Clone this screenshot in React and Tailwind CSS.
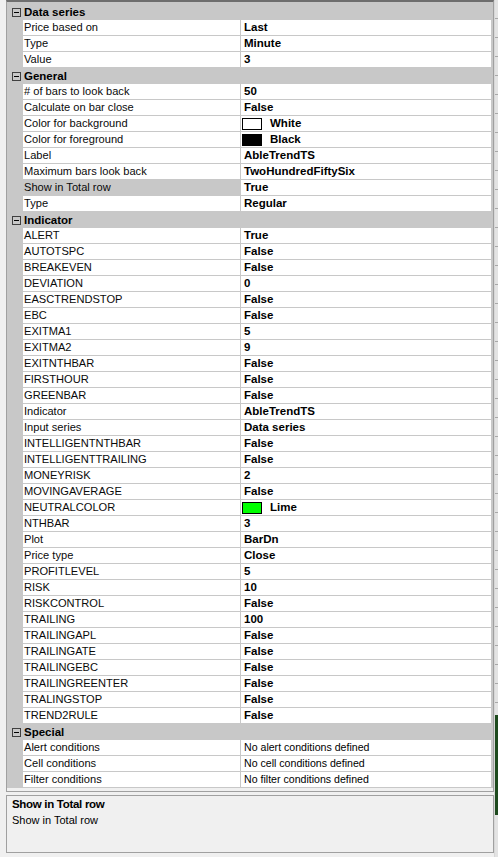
const sections = [
  {
    title: 'Data series',
    rows: [
      ['Price based on', 'Last'],
      ['Type', 'Minute'],
      ['Value', '3'],
    ],
  },
  {
    title: 'General',
    rows: [
      ['# of bars to look back', '50'],
      ['Calculate on bar close', 'False'],
      ['Color for background', 'White', 'white'],
      ['Color for foreground', 'Black', 'black'],
      ['Label', 'AbleTrendTS'],
      ['Maximum bars look back', 'TwoHundredFiftySix'],
      ['Show in Total row', 'True', null, true],
      ['Type', 'Regular'],
    ],
  },
  {
    title: 'Indicator',
    rows: [
      ['ALERT', 'True'],
      ['AUTOTSPC', 'False'],
      ['BREAKEVEN', 'False'],
      ['DEVIATION', '0'],
      ['EASCTRENDSTOP', 'False'],
      ['EBC', 'False'],
      ['EXITMA1', '5'],
      ['EXITMA2', '9'],
      ['EXITNTHBAR', 'False'],
      ['FIRSTHOUR', 'False'],
      ['GREENBAR', 'False'],
      ['Indicator', 'AbleTrendTS'],
      ['Input series', 'Data series'],
      ['INTELLIGENTNTHBAR', 'False'],
      ['INTELLIGENTTRAILING', 'False'],
      ['MONEYRISK', '2'],
      ['MOVINGAVERAGE', 'False'],
      ['NEUTRALCOLOR', 'Lime', 'lime'],
      ['NTHBAR', '3'],
      ['Plot', 'BarDn'],
      ['Price type', 'Close'],
      ['PROFITLEVEL', '5'],
      ['RISK', '10'],
      ['RISKCONTROL', 'False'],
      ['TRAILING', '100'],
      ['TRAILINGAPL', 'False'],
      ['TRAILINGATE', 'False'],
      ['TRAILINGEBC', 'False'],
      ['TRAILINGREENTER', 'False'],
      ['TRALINGSTOP', 'False'],
      ['TREND2RULE', 'False'],
    ],
  },
  {
    title: 'Special',
    plain: true,
    rows: [
      ['Alert conditions', 'No alert conditions defined'],
      ['Cell conditions', 'No cell conditions defined'],
      ['Filter conditions', 'No filter conditions defined'],
    ],
  },
]

const swatchClass = {
  white: 'bg-white',
  black: 'bg-black',
  lime: 'bg-[#00ff00]',
}

function MinusBox() {
  return (
    <span className="relative block h-[9px] w-[9px] border border-[#404040] bg-[#c8c8c8]">
      <span className="absolute left-[1px] top-[3px] h-[1px] w-[5px] bg-black" />
    </span>
  )
}

function Header({ title }) {
  return (
    <div className="flex h-[16px] bg-[#c8c8c8]">
      <div className="flex w-[16px] items-center justify-center pl-[2px]">
        <MinusBox />
      </div>
      <div className="pl-[1px] text-[11.5px] font-bold leading-[16px] text-black">{title}</div>
    </div>
  )
}

function Row({ name, value, swatch, selected, plain }) {
  return (
    <div className="flex h-[16px]">
      <div className="w-[16px] shrink-0 bg-[#c8c8c8]" />
      <div
        className={`w-[217px] shrink-0 border-b border-[#c8c8c8] pl-[1px] text-[11.1px] leading-[15px] text-[#0a0a0a] ${
          selected ? 'bg-[#c8c8c8]' : 'bg-white'
        }`}
      >
        {name}
      </div>
      <div className="flex flex-1 items-center border-b border-l border-[#c8c8c8] bg-white pl-[3px] leading-[15px]">
        {swatch && <span className={`ml-[-2px] mr-[8px] h-[12px] w-[20px] border border-black ${swatchClass[swatch]}`} />}
        <span className={`text-black ${plain ? 'text-[10.6px]' : 'text-[11.5px] font-bold'}`}>{value}</span>
      </div>
    </div>
  )
}

export default function App() {
  return (
    <div
      className="flex h-[857px] w-[498px] overflow-hidden bg-[#f0f0f0]"
      style={{ fontFamily: '"Liberation Sans", Arial, sans-serif' }}
    >
      <div className="ml-[6px] flex w-[488px] flex-col">
        <div className="flex h-[792px] flex-col border-x border-b border-t-2 border-[#a0a0a0] border-t-[#6e6e6e] bg-[#c8c8c8]">
          <div className="mr-[1px] flex flex-col border-r border-[#c8c8c8] pt-[2px]">
            {sections.map((s) => (
              <div key={s.title}>
                <Header title={s.title} />
                {s.rows.map(([name, value, swatch, selected]) => (
                  <Row
                    key={name + value}
                    name={name}
                    value={value}
                    swatch={swatch}
                    selected={selected}
                    plain={s.plain}
                  />
                ))}
              </div>
            ))}
          </div>
          <div className="flex-1 bg-[#f0f0f0]" />
        </div>
        <div className="mt-[3px] h-[58px] border border-[#a0a0a0] bg-[#f0f0f0] px-[5px] pt-0 text-[11.5px] leading-[16px] text-black">
          <div className="font-bold tracking-[-0.3px]">Show in Total row</div>
          <div className="text-[11px]">Show in Total row</div>
        </div>
      </div>
      <div className="flex w-[4px] flex-col border-l border-[#d8d8d8]">
        <div className="h-[715px] bg-[repeating-linear-gradient(to_bottom,#e3e3e3_0px,#e3e3e3_18px,#a8a8a8_18px,#a8a8a8_19px)]" />
        <div className="h-[100px] bg-[#1e4a1e]" />
        <div className="flex-1 bg-[#e3e3e3]" />
      </div>
    </div>
  )
}
